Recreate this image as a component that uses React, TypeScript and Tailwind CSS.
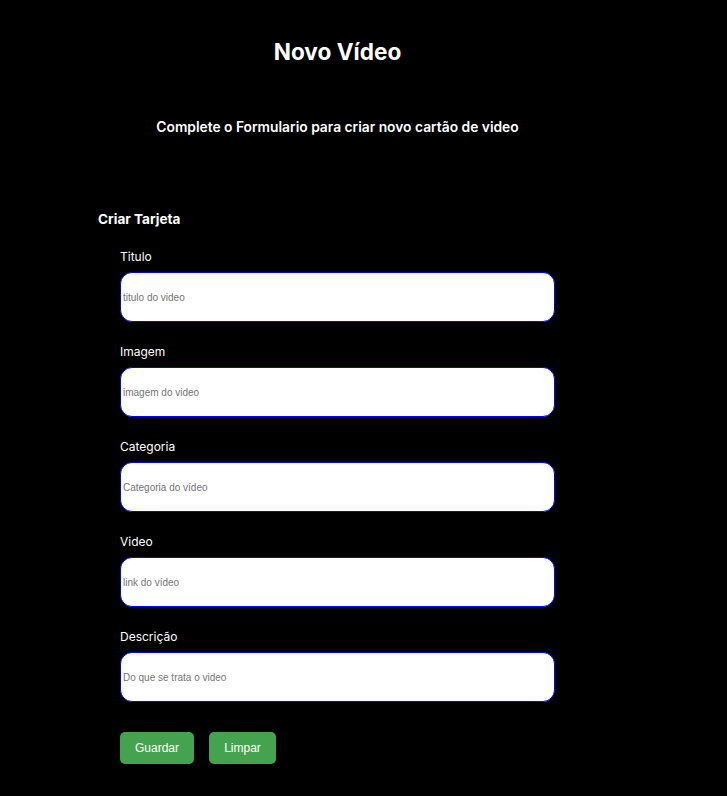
import React from "react";

const fields = [
  { label: "Titulo", placeholder: "titulo do video" },
  { label: "Imagem", placeholder: "imagem do video" },
  { label: "Categoria", placeholder: "Categoria do vídeo" },
  { label: "Video", placeholder: "link do vídeo" },
  { label: "Descrição", placeholder: "Do que se trata o video" },
];

export default function App() {
  return (
    <div className="min-h-[796px] bg-black text-white font-['Inter',sans-serif]">
      <div className="w-[675px] text-center">
        <h1 className="pt-[37px] text-[22.6px] font-bold leading-[30px]">Novo Vídeo</h1>
        <p className="mt-[50px] text-[13.8px] font-semibold leading-5">
          Complete o Formulario para criar novo cartão de video
        </p>
      </div>

      <form className="mt-[72px] pl-[98px]" onSubmit={(e) => e.preventDefault()}>
        <h2 className="text-[13.6px] font-bold leading-5">Criar Tarjeta</h2>

        <div className="mt-[19px] pl-[22px] flex flex-col gap-[21px]">
          {fields.map((f) => (
            <label key={f.label} className="flex flex-col">
              <span className="text-xs leading-[17px]">{f.label}</span>
              <input
                type="text"
                placeholder={f.placeholder}
                className="mt-[7px] w-[435px] h-[50px] rounded-[12px] border border-[#0000ff] bg-white px-[2px] text-[10px] text-black placeholder:text-[#757575] font-['Liberation_Sans',Arial,sans-serif] outline-none"
              />
            </label>
          ))}
        </div>

        <div className="mt-[30px] pl-[22px] flex gap-[15px]">
          <button className="h-8 w-[74px] rounded-[5px] bg-[#45a34f] text-xs text-white font-['Liberation_Sans',Arial,sans-serif]">
            Guardar
          </button>
          <button className="h-8 w-[67px] rounded-[5px] bg-[#45a34f] text-xs text-white font-['Liberation_Sans',Arial,sans-serif]">
            Limpar
          </button>
        </div>
      </form>
    </div>
  );
}
